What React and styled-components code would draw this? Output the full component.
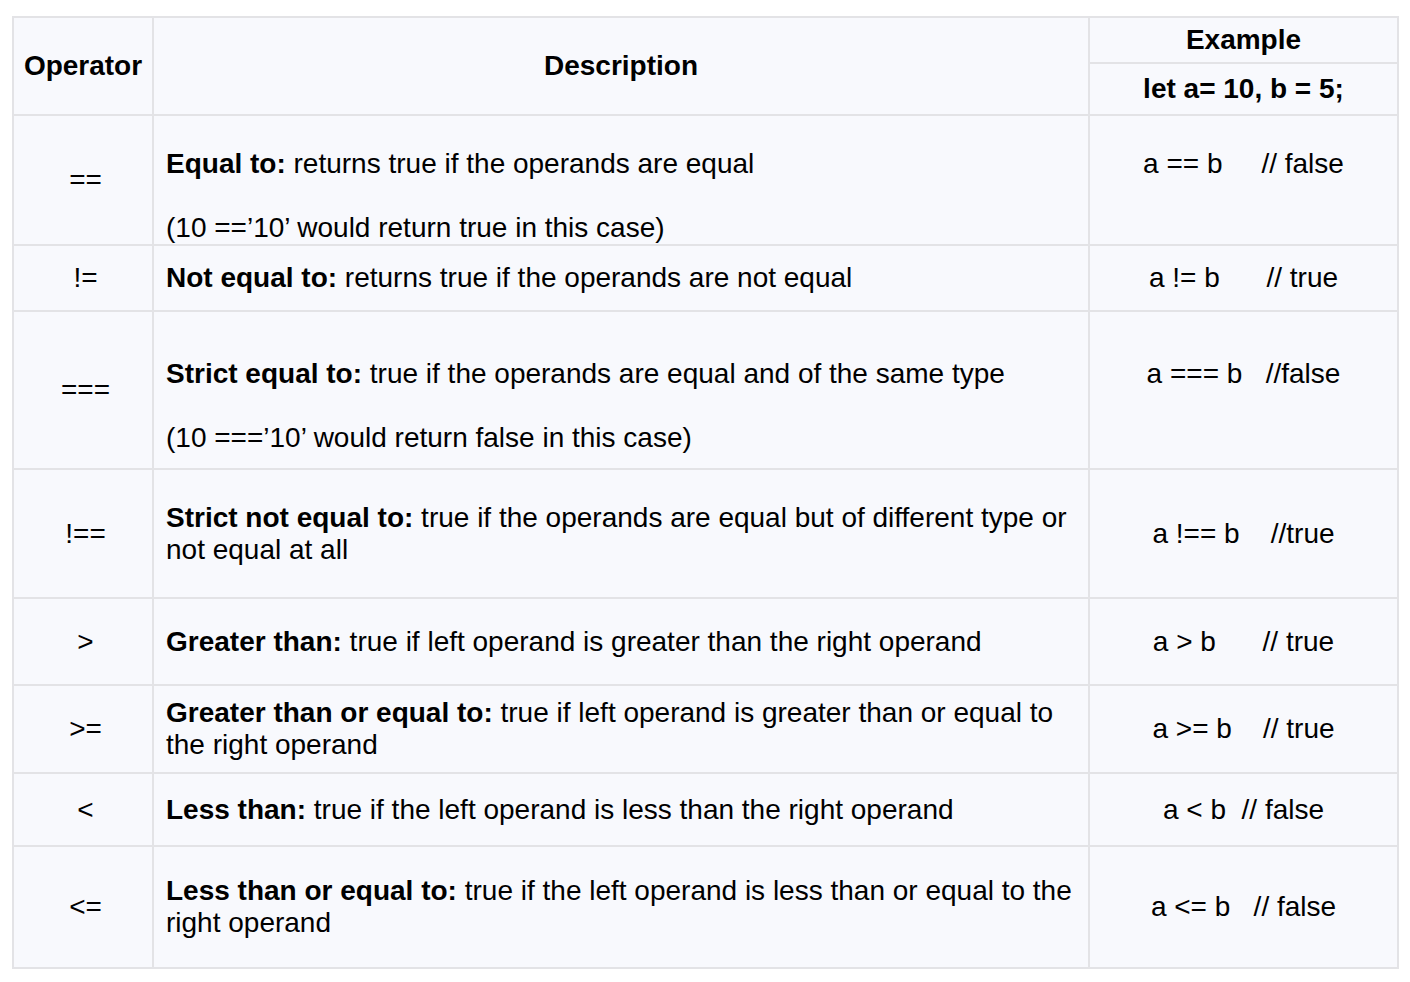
import styled, { createGlobalStyle } from "styled-components"

const GlobalStyle = createGlobalStyle`
  body {
    margin: 0;
    background: #ffffff;
    font-family: "Liberation Sans", Arial, sans-serif;
    color: #000000;
  }
`

const Page = styled.div`
  padding: 16px 0 0 12px;
`

const Table = styled.table`
  border-collapse: collapse;
  table-layout: fixed;
  width: 1385px;
  background: #f8f9fd;
  font-size: 28px;
  line-height: 32px;

  td,
  th {
    border: 2px solid #e3e3e6;
    vertical-align: middle;
  }
`

const HeadCell = styled.th`
  font-weight: 700;
  text-align: center;
  padding: 0 6px;
`

const OpCell = styled.td`
  text-align: center;
  padding: 0 0 0 5px;
`

const DescCell = styled.td`
  text-align: left;
  padding: 0 14px 0 12px;
`

const DescBody = styled.div`
  padding-top: ${(p) => (p.$spaced ? "32px" : "0")};

  p {
    margin: 0;
  }

  p + p {
    margin-top: ${(p) => (p.$spaced ? "32px" : "0")};
  }
`

const ExampleCell = styled.td`
  text-align: center;
  white-space: pre;
  padding: ${(p) => (p.$lift ? "32px 6px 64px" : "0 6px")};
`

const Row = styled.tr`
  height: ${(p) => p.$h}px;
`

const rows = [
  {
    op: "==",
    h: 128,
    spaced: true,
    desc: [
      ["Equal to:", " returns true if the operands are equal"],
      ["", "(10 ==’10’ would return true in this case)"],
    ],
    ex: "a == b     // false",
  },
  {
    op: "!=",
    h: 66,
    desc: [["Not equal to:", " returns true if the operands are not equal"]],
    ex: "a != b      // true",
  },
  {
    op: "===",
    h: 158,
    spaced: true,
    desc: [
      ["Strict equal to:", " true if the operands are equal and of the same type"],
      ["", "(10 ===’10’ would return false in this case)"],
    ],
    ex: "a === b   //false",
  },
  {
    op: "!==",
    h: 129,
    desc: [
      [
        "Strict not equal to:",
        " true if the operands are equal but of different type or not equal at all",
      ],
    ],
    ex: "a !== b    //true",
  },
  {
    op: ">",
    h: 87,
    desc: [["Greater than:", " true if left operand is greater than the right operand"]],
    ex: "a > b      // true",
  },
  {
    op: ">=",
    h: 88,
    desc: [
      [
        "Greater than or equal to:",
        " true if left operand is greater than or equal to the right operand",
      ],
    ],
    ex: "a >= b    // true",
  },
  {
    op: "<",
    h: 73,
    desc: [["Less than:", " true if the left operand is less than the right operand"]],
    ex: "a < b  // false",
  },
  {
    op: "<=",
    h: 122,
    desc: [
      [
        "Less than or equal to:",
        " true if the left operand is less than or equal to the right operand",
      ],
    ],
    ex: "a <= b   // false",
  },
]

export default function App() {
  return (
    <Page>
      <GlobalStyle />
      <Table>
        <colgroup>
          <col style={{ width: 140 }} />
          <col style={{ width: 936 }} />
          <col style={{ width: 309 }} />
        </colgroup>
        <thead>
          <Row $h={46}>
            <HeadCell rowSpan={2}>Operator</HeadCell>
            <HeadCell rowSpan={2}>Description</HeadCell>
            <HeadCell>Example</HeadCell>
          </Row>
          <Row $h={52}>
            <HeadCell>let a= 10, b = 5;</HeadCell>
          </Row>
        </thead>
        <tbody>
          {rows.map((r) => (
            <Row key={r.op} $h={r.h}>
              <OpCell>{r.op}</OpCell>
              <DescCell>
                <DescBody $spaced={r.spaced}>
                  {r.desc.map(([bold, text], i) => (
                    <p key={i}>
                      {bold && <b>{bold}</b>}
                      {text}
                    </p>
                  ))}
                </DescBody>
              </DescCell>
              <ExampleCell $lift={r.spaced}>{r.ex}</ExampleCell>
            </Row>
          ))}
        </tbody>
      </Table>
    </Page>
  )
}
